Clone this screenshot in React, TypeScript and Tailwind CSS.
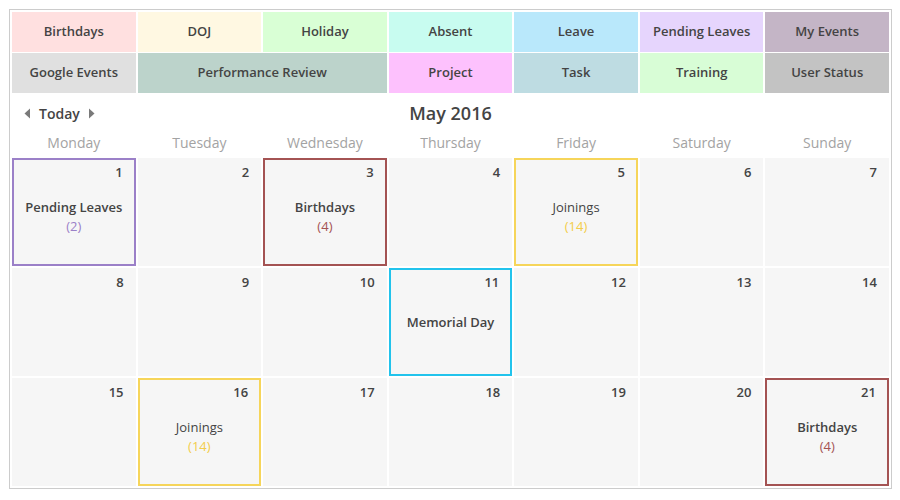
import React from "react";

const legendTop = [
  { name: "Birthdays", bg: "bg-[#ffe0e0]" },
  { name: "DOJ", bg: "bg-[#fff8e2]" },
  { name: "Holiday", bg: "bg-[#d9ffd5]" },
  { name: "Absent", bg: "bg-[#c8fcf0]" },
  { name: "Leave", bg: "bg-[#b9e8fb]" },
  { name: "Pending Leaves", bg: "bg-[#e6d5fd]" },
  { name: "My Events", bg: "bg-[#c4b5c6]" },
];

const legendBottom = [
  { name: "Google Events", bg: "bg-[#e0e0e0]", span: "" },
  { name: "Performance Review", bg: "bg-[#bcd3cb]", span: "col-span-2" },
  { name: "Project", bg: "bg-[#fdc1fd]", span: "" },
  { name: "Task", bg: "bg-[#bedce2]", span: "" },
  { name: "Training", bg: "bg-[#d8fdd6]", span: "" },
  { name: "User Status", bg: "bg-[#c3c3c3]", span: "" },
];

const days = ["Monday", "Tuesday", "Wednesday", "Thursday", "Friday", "Saturday", "Sunday"];

type Ev = { label: string; count?: string; border: string; countColor?: string; weight?: string };

const events: Record<number, Ev> = {
  1: { label: "Pending Leaves", count: "(2)", border: "border-[#9b80c8]", countColor: "text-[#9b80c8]" },
  3: { label: "Birthdays", count: "(4)", border: "border-[#a45353]", countColor: "text-[#a45353]" },
  5: { label: "Joinings", count: "(14)", border: "border-[#f6d55a]", countColor: "text-[#f3cd4a]", weight: "font-normal" },
  11: { label: "Memorial Day", border: "border-[#22c3ec]" },
  16: { label: "Joinings", count: "(14)", border: "border-[#f6d55a]", countColor: "text-[#f3cd4a]", weight: "font-normal" },
  21: { label: "Birthdays", count: "(4)", border: "border-[#a45353]", countColor: "text-[#a45353]" },
};

const Triangle = ({ dir }: { dir: "left" | "right" }) => (
  <svg width="7" height="11" viewBox="0 0 7 11" className="fill-[#7a7a7a]">
    {dir === "left" ? <polygon points="6,0.5 6,10.5 0.5,5.5" /> : <polygon points="1,0.5 1,10.5 6.5,5.5" />}
  </svg>
);

const DayCell = ({ day }: { day: number }) => {
  const ev = events[day];
  return (
    <div
      className={`relative h-[108px] bg-[#f6f6f6] ${ev ? `border-2 ${ev.border}` : ""}`}
    >
      <span className={`absolute text-[13px] font-semibold text-[#444] ${ev ? "top-[3px] right-[11px]" : "top-[5px] right-[12px]"}`}>
        {day}
      </span>
      {ev && (
        <div className={`flex h-full flex-col items-center justify-center ${ev.count ? "pt-[9px]" : ""}`}>
          <span className={`text-[13px] leading-[19px] text-[#444] ${ev.weight ?? "font-semibold"}`}>{ev.label}</span>
          {ev.count && (
            <span className={`text-[13px] font-medium leading-[19px] ${ev.countColor}`}>{ev.count}</span>
          )}
        </div>
      )}
    </div>
  );
};

export default function App() {
  const weeks = [
    [1, 2, 3, 4, 5, 6, 7],
    [8, 9, 10, 11, 12, 13, 14],
    [15, 16, 17, 18, 19, 20, 21],
  ];
  return (
    <div className="h-[500px] w-[900px] bg-white pl-[9px] pt-[9px] font-['Open_Sans',sans-serif]">
      <div className="w-[883px] border border-[#cccccc] p-[2px]">
        {/* legend */}
        <div className="grid grid-cols-7 gap-x-[2px] gap-y-px">
          {legendTop.map((item) => (
            <div
              key={item.name}
              className={`flex h-[40px] items-center justify-center text-[13px] font-semibold text-[#444] ${item.bg}`}
            >
              {item.name}
            </div>
          ))}
          {legendBottom.map((item) => (
            <div
              key={item.name}
              className={`flex h-[40px] items-center justify-center text-[13px] font-semibold text-[#444] ${item.bg} ${item.span}`}
            >
              {item.name}
            </div>
          ))}
        </div>

        {/* toolbar */}
        <div className="grid h-[38px] grid-cols-[1fr_auto_1fr] items-center pt-[2px]">
          <div className="flex items-center gap-[8px] pl-[12px]">
            <Triangle dir="left" />
            <span className="text-[14px] font-semibold text-[#444]">Today</span>
            <Triangle dir="right" />
          </div>
          <div className="text-[18px] font-semibold text-[#444]">May 2016</div>
          <div />
        </div>

        {/* weekday names */}
        <div className="grid h-[26px] grid-cols-7 gap-x-[2px]">
          {days.map((d) => (
            <div key={d} className="text-center text-[14px] leading-[24px] text-[#a3a3a3]">
              {d}
            </div>
          ))}
        </div>

        {/* month grid */}
        <div className="mt-px grid grid-cols-7 gap-[2px]">
          {weeks.flat().map((d) => (
            <DayCell key={d} day={d} />
          ))}
        </div>
      </div>
    </div>
  );
}
